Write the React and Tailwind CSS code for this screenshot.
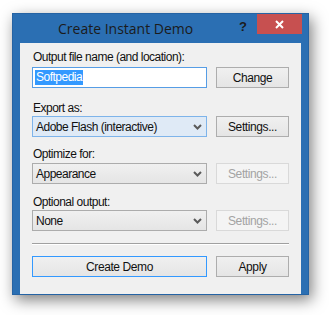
// Create Instant Demo dialog (Windows 8 chrome)
const ui = { fontFamily: '"Liberation Sans", Arial, sans-serif' };

function Chevron() {
  return (
    <svg width="9" height="6" viewBox="0 0 9 6" className="shrink-0">
      <path d="M1 1 L4.5 4.5 L8 1" fill="none" stroke="#5a5a5a" strokeWidth="2" />
    </svg>
  );
}

function Select({ value, active }) {
  return (
    <div
      className={`flex h-[21px] w-[175px] items-center justify-between border pl-[3px] pr-[4px] text-[12px] tracking-[-0.5px] text-[#111] ${
        active ? "border-[#7eb4ea] bg-[#dfeaf6]" : "border-[#acacac] bg-gradient-to-b from-[#f0f0f0] to-[#e5e5e5]"
      }`}
    >
      <span>{value}</span>
      <Chevron />
    </div>
  );
}

function Button({ children, disabled, wide, focused }) {
  return (
    <div
      className={`flex h-[21px] items-center justify-center border text-[12px] tracking-[-0.4px] ${wide ? "w-[175px]" : "w-[73px]"} ${
        disabled
          ? "border-[#d9d9d9] bg-[#f4f4f4] text-[#a3a3a3]"
          : focused
          ? "border-[#3399ff] bg-gradient-to-b from-[#f0f0f0] to-[#e5e5e5] text-[#111]"
          : "border-[#adadad] bg-gradient-to-b from-[#f0f0f0] to-[#e5e5e5] text-[#111]"
      }`}
    >
      {children}
    </div>
  );
}

function Label({ children, className = "" }) {
  return <div className={`h-[14px] pl-px text-[12px] leading-[14px] tracking-[-0.5px] text-[#111] ${className}`}>{children}</div>;
}

export default function App() {
  return (
    <div className="h-[315px] w-[329px] bg-white pl-[12px] pt-[13px]" style={ui}>
      <div className="flex h-[282px] w-[297px] flex-col border border-[#2563a4] bg-[#2b6fb3] shadow-[3px_5px_14px_rgba(0,0,0,0.5)]">
        <div className="flex h-[29px] items-start">
          <div className="pl-[45px] pt-[4px] text-[14px] text-[#1b1b1b]" style={{ fontFamily: '"Open Sans", sans-serif' }}>
            Create Instant Demo
          </div>
          <div className="ml-auto pr-[10px] pt-[3px] text-[13px] font-bold text-[#1b1b1b]">?</div>
          <div className="mr-[6px] flex h-[20px] w-[45px] items-center justify-center bg-[#c75050]">
            <svg width="9" height="9" viewBox="0 0 9 9">
              <path d="M1 1 L8 8 M8 1 L1 8" stroke="#fff" strokeWidth="2" />
            </svg>
          </div>
        </div>
        <div className="mx-[7px] flex flex-1 flex-col bg-[#f0f0f0] px-[12px] pt-[7px]">
          <Label>Output file name (and location):</Label>
          <div className="mt-[3px] flex gap-[9px]">
            <div className="flex h-[21px] w-[175px] items-center border border-[#569de5] bg-white pl-[2px]">
              <span className="bg-[#3399ff] px-px text-[12px] leading-[15px] tracking-[-0.5px] text-white">Softpedia</span>
            </div>
            <Button>Change</Button>
          </div>
          <Label className="mt-[13px]">Export as:</Label>
          <div className="mt-px flex gap-[9px]">
            <Select value="Adobe Flash (interactive)" active />
            <Button>Settings...</Button>
          </div>
          <Label className="mt-[10px]">Optimize for:</Label>
          <div className="mt-[2px] flex gap-[9px]">
            <Select value="Appearance" />
            <Button disabled>Settings...</Button>
          </div>
          <Label className="mt-[11px]">Optional output:</Label>
          <div className="mt-px flex gap-[9px]">
            <Select value="None" />
            <Button disabled>Settings...</Button>
          </div>
          <div className="mt-[12px] h-[2px] border-t border-b border-t-[#a0a0a0] border-b-white" />
          <div className="mt-[11px] flex gap-[9px]">
            <Button wide focused>Create Demo</Button>
            <Button>Apply</Button>
          </div>
        </div>
      </div>
    </div>
  );
}
